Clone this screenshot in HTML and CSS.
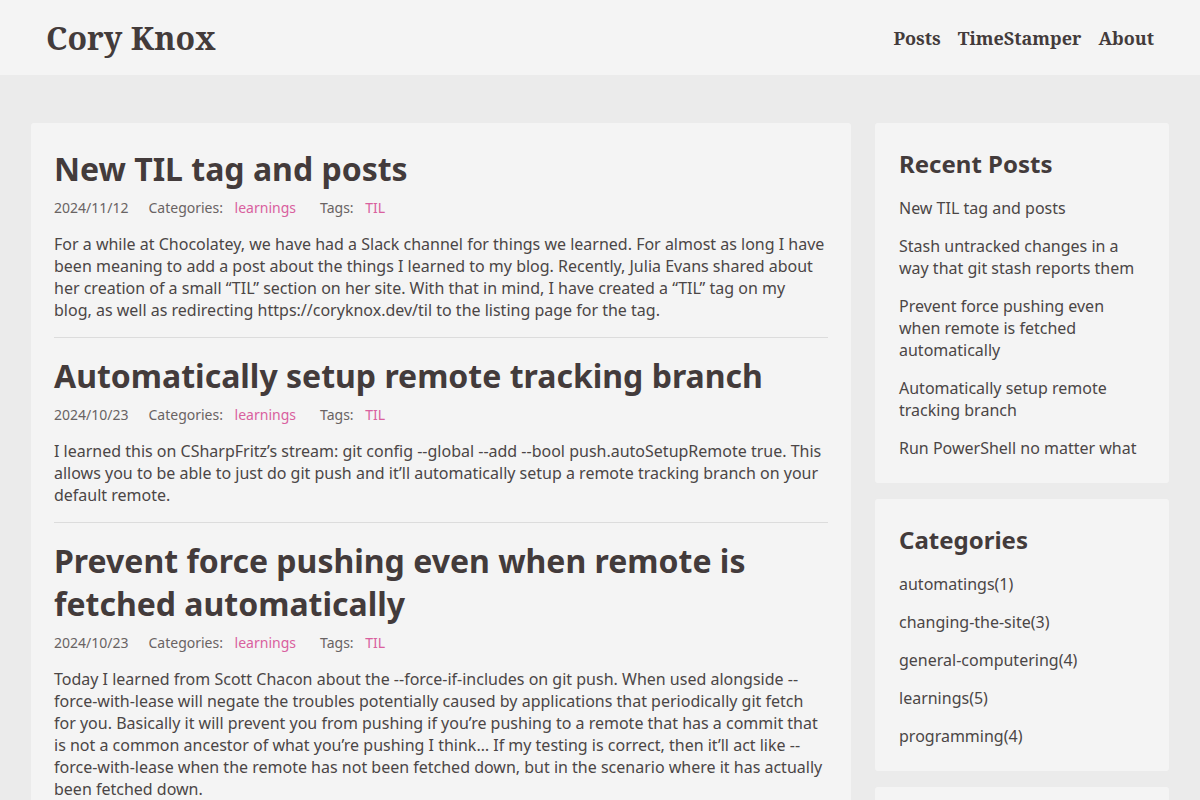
FILE: index.html
```html
<!DOCTYPE html>
<html lang="en">
<head>
<meta charset="utf-8">
<title>Cory Knox</title>
<link rel="stylesheet" href="styles.css">
</head>
<body>
<header class="site-header">
  <a class="brand" href="#">Cory Knox</a>
  <nav class="nav">
    <a href="#">Posts</a>
    <a href="#">TimeStamper</a>
    <a href="#">About</a>
  </nav>
</header>

<div class="layout">
  <main class="card posts">
    <article class="post">
      <h2 class="post-title">New TIL tag and posts</h2>
      <div class="meta">
        <span>2024/11/12</span>
        <span>Categories: <a href="#">learnings</a></span>
        <span>Tags: <a href="#">TIL</a></span>
      </div>
      <p>For a while at Chocolatey, we have had a Slack channel for things we learned. For almost as long I have been meaning to add a post about the things I learned to my blog. Recently, Julia Evans shared about her creation of a small “TIL” section on her site. With that in mind, I have created a “TIL” tag on my blog, as well as redirecting https://coryknox.dev/til to the listing page for the tag.</p>
    </article>
    <article class="post">
      <h2 class="post-title">Automatically setup remote tracking branch</h2>
      <div class="meta">
        <span>2024/10/23</span>
        <span>Categories: <a href="#">learnings</a></span>
        <span>Tags: <a href="#">TIL</a></span>
      </div>
      <p>I learned this on CSharpFritz’s stream: git config --global --add --bool push.autoSetupRemote true. This allows you to be able to just do git push and it’ll automatically setup a remote tracking branch on your default remote.</p>
    </article>
    <article class="post">
      <h2 class="post-title">Prevent force pushing even when remote is fetched automatically</h2>
      <div class="meta">
        <span>2024/10/23</span>
        <span>Categories: <a href="#">learnings</a></span>
        <span>Tags: <a href="#">TIL</a></span>
      </div>
      <p>Today I learned from Scott Chacon about the --force-if-includes on git push. When used alongside --force-with-lease will negate the troubles potentially caused by applications that periodically git fetch for you. Basically it will prevent you from pushing if you’re pushing to a remote that has a commit that is not a common ancestor of what you’re pushing I think… If my testing is correct, then it’ll act like --force-with-lease when the remote has not been fetched down, but in the scenario where it has actually been fetched down.</p>
    </article>
  </main>

  <aside class="sidebar">
    <section class="card widget">
      <h3 class="widget-title">Recent Posts</h3>
      <ul class="widget-list">
        <li><a href="#">New TIL tag and posts</a></li>
        <li><a href="#">Stash untracked changes in a way that git stash reports them</a></li>
        <li><a href="#">Prevent force pushing even when remote is fetched automatically</a></li>
        <li><a href="#">Automatically setup remote tracking branch</a></li>
        <li><a href="#">Run PowerShell no matter what</a></li>
      </ul>
    </section>
    <section class="card widget">
      <h3 class="widget-title">Categories</h3>
      <ul class="widget-list">
        <li><a href="#">automatings(1)</a></li>
        <li><a href="#">changing-the-site(3)</a></li>
        <li><a href="#">general-computering(4)</a></li>
        <li><a href="#">learnings(5)</a></li>
        <li><a href="#">programming(4)</a></li>
      </ul>
    </section>
    <section class="card widget">
      <h3 class="widget-title">Tags</h3>
      <ul class="widget-list">
        <li><a href="#">TIL(5)</a></li>
      </ul>
    </section>
  </aside>
</div>
</body>
</html>
```

FILE: styles.css
```css
* { box-sizing: border-box; }

html, body {
  margin: 0;
  padding: 0;
}

body {
  background: #ebebeb;
  color: #4b4646;
  font-family: "Noto Sans", "Open Sans", sans-serif;
  font-size: 16px;
  line-height: 22px;
}

a { text-decoration: none; color: inherit; }

/* top bar */
.site-header {
  height: 75px;
  background: #f4f4f4;
  display: flex;
  align-items: center;
  justify-content: space-between;
  padding: 0 46px 0 46px;
}

.brand {
  font-family: "Noto Serif", "DejaVu Serif", serif;
  font-weight: 700;
  font-size: 32px;
  color: #433b3b;
}

.nav {
  display: flex;
  gap: 17px;
  font-family: "Noto Serif", "DejaVu Serif", serif;
  font-weight: 700;
  font-size: 18px;
  color: #433b3b;
}

/* two-column body */
.layout {
  display: flex;
  align-items: flex-start;
  gap: 24px;
  margin: 48px 31px 0;
}

.card {
  background: #f4f4f4;
  border-radius: 3px;
}

.posts {
  width: 820px;
  flex: none;
  padding: 8px 23px 0;
}

.post {
  padding: 16px 0;
  border-bottom: 1px solid #dcdcdc;
}

.post:last-child { border-bottom: none; }

.post-title {
  margin: 0;
  font-size: 32px;
  line-height: 43px;
  font-weight: 700;
  color: #433b3b;
}

.meta {
  display: flex;
  gap: 20px;
  margin-top: 9px;
  font-size: 14px;
  line-height: 18px;
  color: #696363;
}

.meta a {
  color: #d9609e;
  margin-left: 4px;
  padding: 0 4px;
}

.post p {
  margin: 16px 3px 0 0;
}

/* sidebar widgets */
.sidebar {
  flex: 1;
  display: flex;
  flex-direction: column;
  gap: 16px;
}

.widget {
  padding: 24px;
}

.widget-title {
  margin: 0 0 16px;
  font-size: 24px;
  line-height: 34px;
  font-weight: 700;
  color: #433b3b;
}

.widget-list {
  list-style: none;
  margin: 0;
  padding: 0;
  display: flex;
  flex-direction: column;
  gap: 16px;
}
```
